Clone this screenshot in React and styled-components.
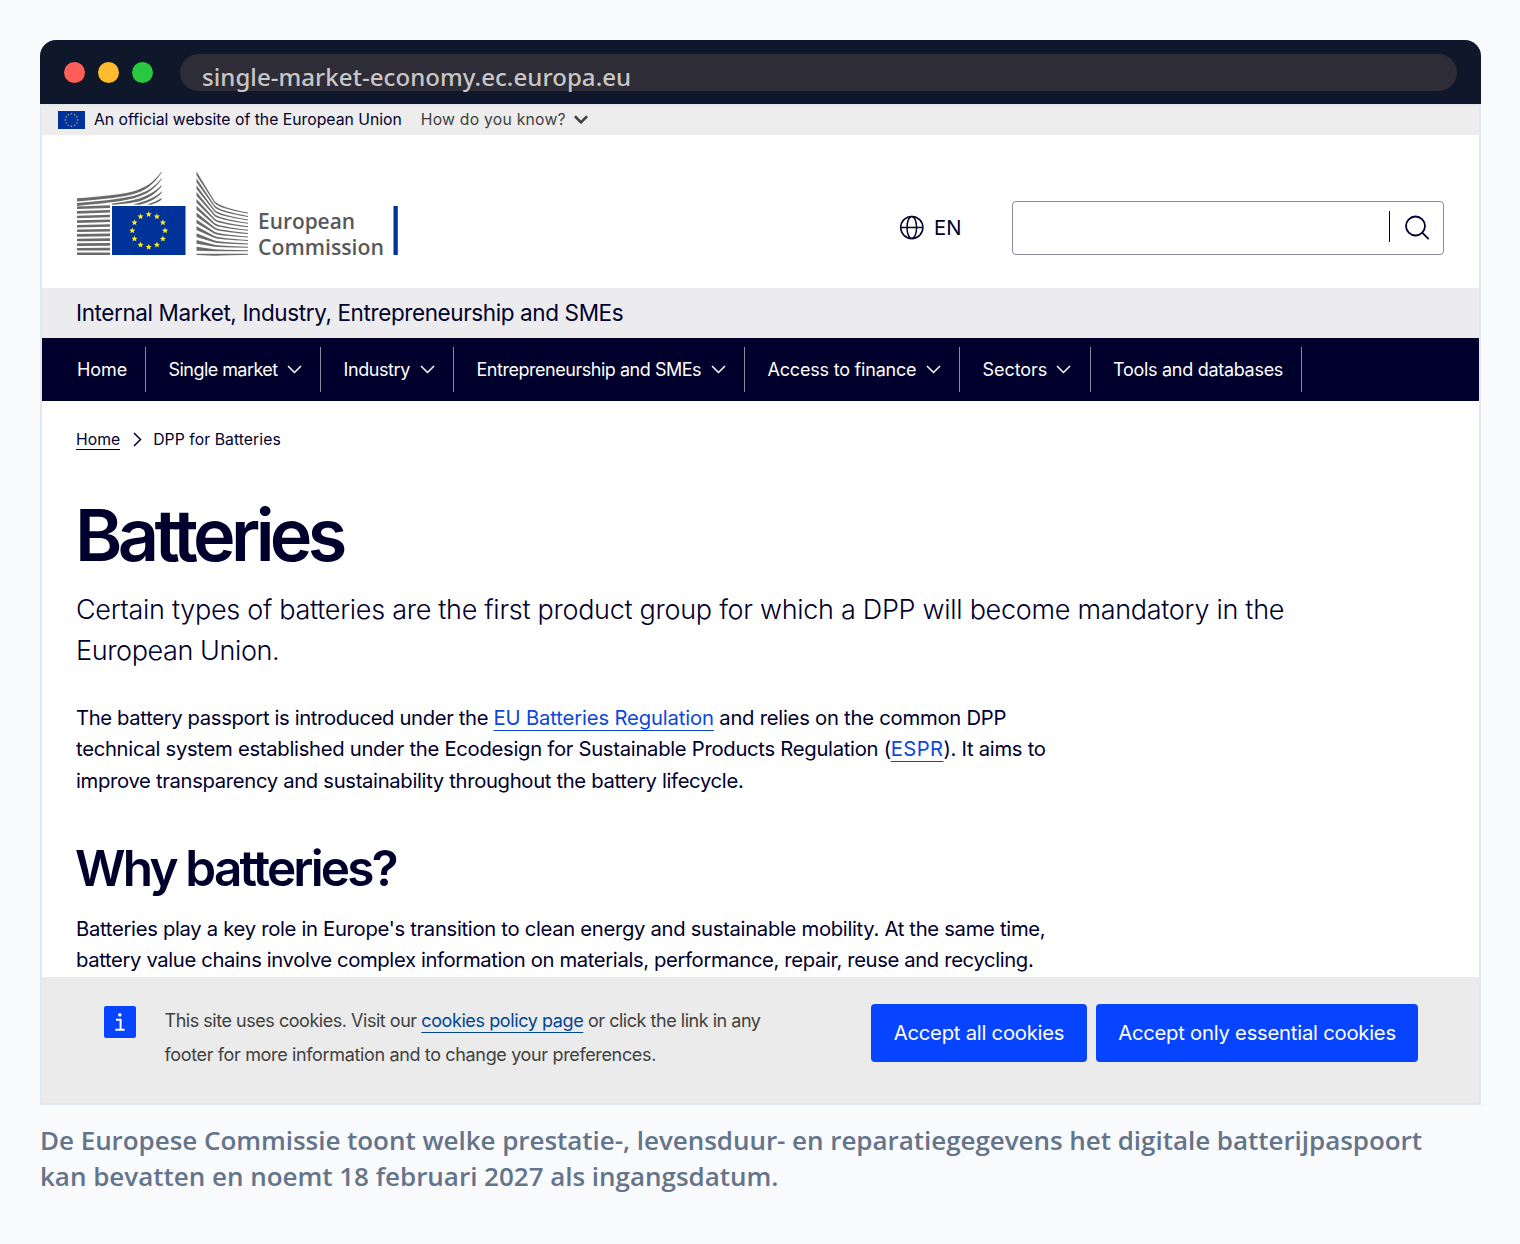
import styled, { createGlobalStyle } from "styled-components";

const GlobalStyle = createGlobalStyle`
  * {
    box-sizing: border-box;
  }
  body {
    margin: 0;
    background: #f8fafc;
    font-family: Inter, "Liberation Sans", sans-serif;
    color: #00002c;
  }
`;

const navItems = [
  { label: "Home", width: 104, spacing: -0.1 },
  { label: "Single market", menu: true, width: 175, spacing: -0.55 },
  { label: "Industry", menu: true, width: 133, spacing: -0.42 },
  { label: "Entrepreneurship and SMEs", menu: true, width: 291, spacing: -0.47 },
  { label: "Access to finance", menu: true, width: 215, spacing: -0.2 },
  { label: "Sectors", menu: true, width: 130.5, spacing: -0.05 },
  { label: "Tools and databases", width: 211.5, spacing: -0.29 },
];

function starPoints(cx, cy, r) {
  const points = [];
  for (let i = 0; i < 10; i++) {
    const radius = i % 2 === 0 ? r : r * 0.42;
    const angle = (Math.PI / 5) * i - Math.PI / 2;
    points.push(
      `${cx + radius * Math.cos(angle)},${cy + radius * Math.sin(angle)}`
    );
  }
  return points.join(" ");
}

function Stars({ cx, cy, ring, size, color }) {
  return [...Array(12)].map((_, i) => {
    const a = (Math.PI / 6) * i;
    return (
      <polygon
        key={i}
        fill={color}
        points={starPoints(cx + ring * Math.sin(a), cy - ring * Math.cos(a), size)}
      />
    );
  });
}

function SmallFlag() {
  return (
    <svg width="27" height="18" viewBox="0 0 27 18">
      <rect width="27" height="18" fill="#039" />
      <Stars cx={13.5} cy={9} ring={6.2} size={1.2} color="#b5b07a" />
    </svg>
  );
}

// one line of the right wing: steep from the left edge, then flat to the right
function wingLine(i) {
  const left = 171.5 + i * 6.85;
  const right = 212.6 + i * 3.42;
  const x = 218;
  const y = 206.5 + i * 3.93;
  const startX = 196.5 + (x - 196.5) * 0.84;
  const startY = left + (y - left) * 0.84;
  const thick = Math.min(3.8, 255 - left);
  return `M196.500 ${left}L${startX} ${startY}Q${x} ${y} 248 ${right}V${
    right + 1
  }Q${x} ${y + 1.5} ${startX} ${startY + 2}L196.500 ${left + thick}Z`;
}

function CommissionLogo() {
  return (
    <svg width="324" height="92" viewBox="76 170 324 92">
      <g fill="none" stroke="#6b6b6b">
        {[...Array(11)].map((_, i) => (
          <path
            key={i}
            strokeWidth="2.6"
            d={`M77 ${208.6 + i * 4.52 - (10 - i) * 0.08} L110 ${
              206.6 + i * 4.72
            }`}
          />
        ))}
      </g>
      <g fill="#6b6b6b">
        <path d="M77 198.3C100 196.500 118 195 131 192C146 188 154 182 161.500 171.500V172.800C154 184 146 191 132 194.500C118 198 100 199.500 77 201.500Z" />
        <path d="M77 203C100 201 120 199 133 196C147 192 155 187 161.500 178V179.300C155 189 147 194.500 134 198.300C120 202 100 203.500 77 206Z" />
        <path d="M112 203.500C122 202.300 132 200.500 139 198.500C149 195 156 191 161.500 185V186.500C156 193.500 149 198 141 200.700C133 203.300 122 204 112 204.700Z" />
        <path d="M133 204.500C145 201.500 155 197.500 161.500 191.500V193C156 199 149 202.500 140 204.700Z" />
        <path d="M147 204.500C153 202.500 158 200.500 161.500 198V199.700C158 202.200 155 203.500 151 204.700Z" />
      </g>
      <g fill="#6b6b6b">
        {[...Array(13)].map((_, i) => (
          <path key={i} d={wingLine(i)} />
        ))}
      </g>
      <rect x="112" y="206" width="73.500" height="49" fill="#039" />
      <Stars cx={148.7} cy={230.7} ring={16.4} size={3.3} color="#ffed2a" />
      <g
        fill="#58595b"
        fontFamily="'Open Sans', 'Noto Sans', sans-serif"
        fontWeight="600"
        fontSize="21.500"
      >
        <text x="258" y="229" textLength="97" lengthAdjust="spacingAndGlyphs">
          European
        </text>
        <text x="258" y="254.500" textLength="126" lengthAdjust="spacingAndGlyphs">
          Commission
        </text>
      </g>
      <rect x="393.500" y="206" width="4.300" height="49" fill="#039" />
    </svg>
  );
}

function Chevron({ width = 15, stroke = 1.5 }) {
  return (
    <svg width={width} height="9" viewBox="0 0 15 9" fill="none">
      <path d="M1 1L7.500 7.500L14 1" stroke="currentColor" strokeWidth={stroke} />
    </svg>
  );
}

function GlobeIcon() {
  return (
    <svg
      width="25"
      height="26"
      viewBox="0 0 25 26"
      fill="none"
      stroke="currentColor"
      strokeWidth="1.500"
    >
      <circle cx="12.800" cy="13.500" r="11.100" />
      <ellipse cx="12.800" cy="13.500" rx="4.800" ry="11.100" />
      <path d="M1.700 13.500H24" />
    </svg>
  );
}

function SearchIcon() {
  return (
    <svg
      width="26"
      height="26"
      viewBox="0 0 26 26"
      fill="none"
      stroke="currentColor"
      strokeWidth="1.800"
    >
      <circle cx="11.500" cy="12" r="9.500" />
      <path d="M18.200 18.700L24.700 25.200" />
    </svg>
  );
}

function InfoIcon() {
  return (
    <svg width="32" height="32" viewBox="0 0 32 32">
      <rect width="32" height="32" rx="2" fill="#0644ff" />
      <rect x="14.200" y="7.300" width="3.200" height="3.200" rx="1" fill="#fff" />
      <path
        d="M12 13.700H16.600V23.500M11.300 23.800H20.700"
        fill="none"
        stroke="#fff"
        strokeWidth="2"
      />
    </svg>
  );
}

export default function App() {
  return (
    <Figure>
      <GlobalStyle />
      <Browser>
        <TitleBar>
          <Dot $color="#ff5f57" />
          <Dot $color="#febc2e" />
          <Dot $color="#28c840" />
          <AddressBar>single-market-economy.ec.europa.eu</AddressBar>
        </TitleBar>
        <Page>
          <OfficialBar>
            <SmallFlag />
            <OfficialText>An official website of the European Union</OfficialText>
            <KnowButton>
              How do you know?
              <Chevron width={14} stroke={2.8} />
            </KnowButton>
          </OfficialBar>
          <SiteHeader>
            <CommissionLogo />
            <Language>
              <GlobeIcon />
              EN
            </Language>
            <SearchBox>
              <SearchButton>
                <SearchIcon />
              </SearchButton>
            </SearchBox>
          </SiteHeader>
          <SiteName>
            <Line $spacing={-0.39}>
              Internal Market, Industry, Entrepreneurship and SMEs
            </Line>
          </SiteName>
          <Nav>
            {navItems.map((item) => (
              <NavItem key={item.label} $width={item.width}>
                <Line $spacing={item.spacing}>{item.label}</Line>
                {item.menu && <Chevron />}
              </NavItem>
            ))}
          </Nav>
          <Breadcrumb>
            <HomeLink>Home</HomeLink>
            <svg width="9" height="15" viewBox="0 0 9 15" fill="none">
              <path d="M1 1L7.500 7.500L1 14" stroke="currentColor" strokeWidth="1.500" />
            </svg>
            <Line $spacing={0.06}>DPP for Batteries</Line>
          </Breadcrumb>
          <Content>
            <Title>Batteries</Title>
            <Lead>
              <Line $spacing={-0.29}>
                Certain types of batteries are the first product group for which a
                DPP will become mandatory in the
              </Line>
              <Line $spacing={-0.4}>European Union.</Line>
            </Lead>
            <Paragraph>
              <Line $spacing={-0.36}>
                The battery passport is introduced under the{" "}
                <TextLink $spacing={-0.15}>EU Batteries Regulation</TextLink>
                <Tail>{" and relies on the common DPP"}</Tail>
              </Line>
              <Line $spacing={-0.29}>
                technical system established under the Ecodesign for Sustainable
                Products Regulation (<TextLink $spacing={0.4}>ESPR</TextLink>). It
                aims to
              </Line>
              <Line $spacing={-0.33}>
                improve transparency and sustainability throughout the battery
                lifecycle.
              </Line>
            </Paragraph>
            <SubTitle>Why batteries?</SubTitle>
            <Paragraph>
              <Line $spacing={-0.31}>
                Batteries play a key role in Europe's transition to clean energy
                and sustainable mobility. At the same time,
              </Line>
              <Line $spacing={-0.37}>
                battery value chains involve complex information on materials,
                performance, repair, reuse and recycling.
              </Line>
            </Paragraph>
          </Content>
          <CookieBar>
            <InfoIcon />
            <CookieText>
              <Line $spacing={-0.47}>
                This site uses cookies. Visit our{" "}
                <PolicyLink $spacing={-0.4}>cookies policy page</PolicyLink>
                {" or click the link in any"}
              </Line>
              <Line $spacing={-0.35}>
                footer for more information and to change your preferences.
              </Line>
            </CookieText>
            <CookieButton $width={216}>Accept all cookies</CookieButton>
            <CookieButton $width={322}>Accept only essential cookies</CookieButton>
          </CookieBar>
        </Page>
      </Browser>
      <Caption>
        <Line $spacing={-0.042}>
          De Europese Commissie toont welke prestatie-, levensduur- en
          reparatiegegevens het digitale batterijpaspoort
        </Line>
        <Line $spacing={-0.02}>
          kan bevatten en noemt 18 februari 2027 als ingangsdatum.
        </Line>
      </Caption>
    </Figure>
  );
}

const Figure = styled.figure`
  margin: 0;
  padding: 40px 39px 0 40px;
  width: 1520px;
  height: 1244px;
  overflow: hidden;
`;
const Browser = styled.div`
  height: 1065px;
  border-radius: 16px 16px 0 0;
  overflow: hidden;
`;
const TitleBar = styled.div`
  display: flex;
  align-items: center;
  gap: 13px;
  height: 64px;
  padding: 0 24px;
  background: #0f172a;
`;
const Dot = styled.span`
  width: 21px;
  height: 21px;
  margin-top: 1px;
  border-radius: 50%;
  background: ${(props) => props.$color};
`;
const AddressBar = styled.div`
  flex: 1;
  height: 37px;
  margin-left: 14px;
  padding-left: 22px;
  border-radius: 19px;
  background: #2e2d37;
  color: #c9c7c5;
  font: 500 24px/45px "Noto Sans", sans-serif;
  letter-spacing: 0.07px;
  white-space: nowrap;
`;
const Page = styled.div`
  display: flex;
  flex-direction: column;
  height: 1001px;
  border: 2px solid #e2e8f0;
  background: #fff;
`;
const Line = styled.span`
  display: block;
  white-space: nowrap;
  letter-spacing: ${(props) => props.$spacing}px;
`;
const OfficialBar = styled.div`
  display: flex;
  align-items: center;
  height: 29px;
  padding: 0 16px 2px;
  background: #ededed;
  font-size: 15.750px;
`;
const OfficialText = styled.span`
  margin-left: 9px;
  white-space: nowrap;
`;
const KnowButton = styled.span`
  display: flex;
  align-items: center;
  gap: 8px;
  margin-left: 19px;
  color: #404040;
  letter-spacing: 0.22px;
  white-space: nowrap;
`;
const SiteHeader = styled.header`
  display: flex;
  align-items: flex-start;
  height: 153px;
  padding: 35px 35px 0 34px;
`;
const Language = styled.div`
  display: flex;
  align-items: center;
  gap: 10px;
  height: 52px;
  margin: 31px 0 0 auto;
  width: 113px;
  font-size: 20.250px;
`;
const SearchBox = styled.div`
  display: flex;
  justify-content: flex-end;
  align-items: center;
  width: 432px;
  height: 54px;
  margin-top: 31px;
  padding-bottom: 3px;
  border: 1px solid #8a8a9c;
  border-radius: 4px;
`;
const SearchButton = styled.div`
  display: flex;
  align-items: center;
  width: 54px;
  height: 31px;
  padding-left: 14px;
  border-left: 1.500px solid #00002c;
`;
const SiteName = styled.div`
  height: 50px;
  padding-left: 34px;
  background: #ececee;
  font-size: 22.500px;
  line-height: 49px;
`;
const Nav = styled.nav`
  display: flex;
  align-items: center;
  height: 63px;
  background: #00002c;
  color: #fff;
  font-size: 18px;
`;
const NavItem = styled.div`
  display: flex;
  align-items: center;
  justify-content: space-between;
  flex: none;
  width: ${(props) => props.$width}px;
  height: 45px;
  padding: 0 18.500px 0 22.500px;
  border-right: 1px solid #8a8a9c;
  &:first-child {
    padding-left: 35px;
  }
`;
const Breadcrumb = styled.div`
  display: flex;
  align-items: center;
  height: 76px;
  padding-left: 34px;
  font-size: 15.750px;
  svg {
    margin: 0 11px 0 13px;
  }
`;
const HomeLink = styled.span`
  height: 19px;
  box-shadow: 0 1px 0 #00002c;
`;
const Content = styled.main`
  flex: 1;
  min-height: 0;
  overflow: hidden;
  padding: 17px 34px 0;
`;
const Title = styled.h1`
  margin: 0 0 0 -1px;
  font-size: 72px;
  font-weight: 600;
  line-height: 81px;
  letter-spacing: -4.650px;
`;
const Lead = styled.div`
  margin-top: 15px;
  font-size: 27px;
  font-weight: 300;
  line-height: 40.500px;
`;
const Paragraph = styled.div`
  font-size: 20.250px;
  line-height: 31.500px;
  ${Lead} + & {
    margin-top: 30.500px;
  }
`;
const TextLink = styled.span`
  color: #0d47d9;
  letter-spacing: ${(props) => props.$spacing}px;
  text-decoration: underline;
  text-underline-offset: 5px;
  text-decoration-thickness: 1px;
`;
const Tail = styled.span`
  letter-spacing: -0.25px;
`;
const SubTitle = styled.h2`
  margin: 41px 0 13.500px -1px;
  font-size: 49.500px;
  font-weight: 600;
  line-height: 62px;
  letter-spacing: -2.800px;
`;
const CookieBar = styled.div`
  display: flex;
  align-items: flex-start;
  flex: none;
  height: 126px;
  padding: 27px 61px 0 62px;
  background: #ebebeb;
  > svg {
    margin-top: 2px;
  }
`;
const CookieText = styled.div`
  flex: 1;
  margin-left: 28.500px;
  color: #404040;
  font-size: 18px;
  line-height: 34px;
`;
const PolicyLink = styled(TextLink)`
  color: #004494;
`;
const CookieButton = styled.div`
  width: ${(props) => props.$width}px;
  height: 58px;
  margin-left: 9px;
  border-radius: 4px;
  background: #0644ff;
  color: #fff;
  font-size: 20.250px;
  letter-spacing: -0.240px;
  line-height: 57px;
  text-align: center;
  white-space: nowrap;
`;
const Caption = styled.figcaption`
  margin-top: 17px;
  color: #64748b;
  font: 600 26px/36px "Open Sans", sans-serif;
`;
